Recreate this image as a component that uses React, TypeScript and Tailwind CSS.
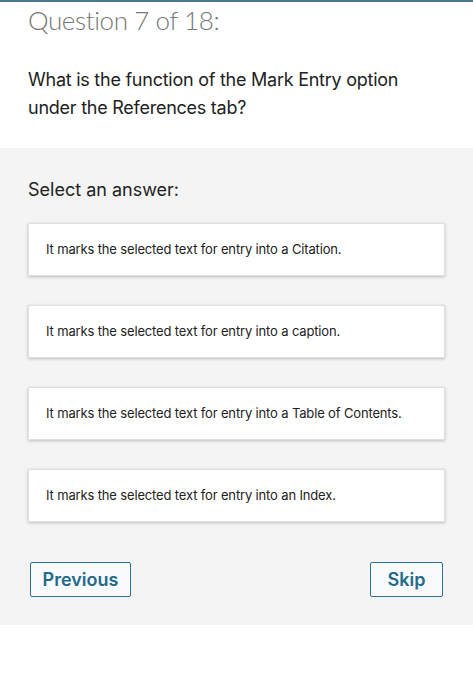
const answers = [
  'It marks the selected text for entry into a Citation.',
  'It marks the selected text for entry into a caption.',
  'It marks the selected text for entry into a Table of Contents.',
  'It marks the selected text for entry into an Index.',
]

export default function App() {
  return (
    <div
      className="min-h-screen bg-white border-t-2 border-[#4d7590] text-[#222]"
      style={{ fontFamily: 'Inter, "Noto Sans", sans-serif' }}
    >
      <section className="px-7 pb-[26px]">
        <h1
          className="h-9 flex items-center text-[26px] font-light tracking-[-0.4px] text-[#777]"
          style={{ fontFamily: 'Lato, Inter, sans-serif' }}
        >
          Question 7 of 18:
        </h1>
        <p className="mt-[28px] text-[18px] leading-[28px] text-[#222] tracking-[-0.25px]">
          What is the function of the Mark Entry option under the References tab?
        </p>
      </section>

      <section className="bg-[#f4f4f4] px-7 pt-7 pb-7">
        <h2 className="text-[18px] leading-[28px] text-[#222]">Select an answer:</h2>
        <div className="mt-[19px] flex flex-col gap-[29px]">
          {answers.map((a) => (
            <button
              key={a}
              className="h-[53px] w-full flex items-center px-[17px] bg-white border border-[#e0e0e0] shadow-[0_1px_3px_rgba(0,0,0,0.22)] text-left text-[13px] tracking-[-0.15px] text-[#222]"
            >
              {a}
            </button>
          ))}
        </div>
        <div className="mt-10 flex justify-between px-[2px]">
          <button className="h-[35px] w-[101px] rounded-[2px] border-[1.5px] border-[#2c7191] bg-[#f8fafb] text-[18px] font-semibold text-[#236a8a]">
            Previous
          </button>
          <button className="h-[35px] w-[73px] rounded-[2px] border-[1.5px] border-[#2c7191] bg-[#f8fafb] text-[18px] font-semibold text-[#236a8a]">
            Skip
          </button>
        </div>
      </section>
    </div>
  )
}
